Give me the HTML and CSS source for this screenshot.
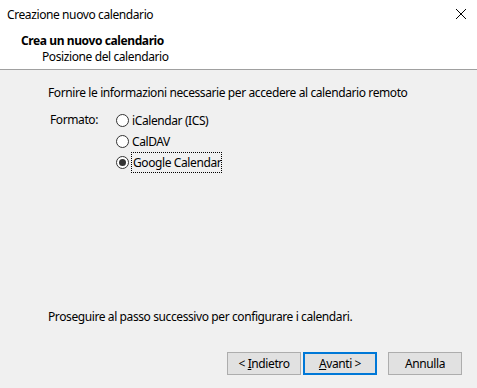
FILE: index.html
```html
<!DOCTYPE html>
<html lang="it">
<head>
    <meta charset="UTF-8">
    <title>Creazione nuovo calendario</title>
    <link rel="stylesheet" href="styles.css">
</head>
<body>
    <div class="dialog">
        <div class="header">
            <div class="titlebar">
                <span class="title">Creazione nuovo calendario</span>
                <svg class="close" width="12" height="12" viewBox="0 0 12 12">
                    <path d="M1 1 L11 11 M11 1 L1 11" stroke="#000" stroke-width="1"/>
                </svg>
            </div>
            <div class="heading">Crea un nuovo calendario</div>
            <div class="subheading">Posizione del calendario</div>
        </div>
        <div class="content">
            <p class="intro">Fornire le informazioni necessarie per accedere al calendario remoto</p>
            <div class="format">
                <span class="format-label">Formato:</span>
                <div class="options">
                    <label class="option"><span class="radio"></span><span>iCalendar (ICS)</span></label>
                    <label class="option"><span class="radio"></span><span>CalDAV</span></label>
                    <label class="option"><span class="radio checked"></span><span class="focus">Google Calendar</span></label>
                </div>
            </div>
            <p class="hint">Proseguire al passo successivo per configurare i calendari.</p>
        </div>
        <div class="buttons">
            <button class="btn">&lt; <u>I</u>ndietro</button>
            <button class="btn primary"><u>A</u>vanti &gt;</button>
            <button class="btn cancel">Annulla</button>
        </div>
    </div>
</body>
</html>
```

FILE: styles.css
```css
* {
    box-sizing: border-box;
}
body {
    margin: 0;
    font-family: 'Noto Sans', sans-serif;
    font-size: 12px;
    letter-spacing: -0.4px;
    color: #000;
    background-color: #f0f0f0;
}
.dialog {
    width: 477px;
    height: 388px;
    display: flex;
    flex-direction: column;
}
.header {
    background-color: #fff;
    height: 70px;
    border-bottom: 1px solid #a0a0a0;
}
.titlebar {
    display: flex;
    justify-content: space-between;
    align-items: center;
    height: 28px;
    padding: 0 10px 0 7px;
}
.close {
    margin-top: -1px;
}
.heading {
    font-weight: bold;
    padding-left: 21px;
    margin-top: 5px;
    line-height: 16px;
}
.subheading {
    padding-left: 42px;
    line-height: 16px;
}
.content {
    flex: 1;
    padding: 15px 0 0 48px;
    display: flex;
    flex-direction: column;
}
.intro {
    margin: 0;
    line-height: 16px;
}
.format {
    display: flex;
    margin-top: 11px;
    margin-left: 2px;
}
.format-label {
    width: 66px;
    line-height: 16px;
}
.options {
    display: flex;
    flex-direction: column;
    gap: 5px;
}
.option {
    display: flex;
    align-items: center;
    height: 16px;
}
.radio {
    width: 13px;
    height: 13px;
    border: 1px solid #333;
    border-radius: 50%;
    background-color: #fff;
    margin-right: 3px;
    position: relative;
}
.radio.checked::after {
    content: "";
    position: absolute;
    left: 2px;
    top: 2px;
    width: 7px;
    height: 7px;
    border-radius: 50%;
    background-color: #333;
}
.focus {
    outline: 1px dotted #000;
    padding: 1px 0 1px 1px;
}
.hint {
    margin: auto 0 0 0;
    line-height: 16px;
}
.buttons {
    display: flex;
    padding: 27px 0 13px 227px;
}
.btn {
    font-family: inherit;
    font-size: 12px;
    letter-spacing: -0.4px;
    width: 74px;
    height: 23px;
    padding: 0;
    background-color: #e1e1e1;
    border: 1px solid #adadad;
    color: #000;
}
.btn.primary {
    border: 2px solid #0078d7;
    margin-left: 2px;
}
.btn.cancel {
    margin-left: 11px;
}
```
